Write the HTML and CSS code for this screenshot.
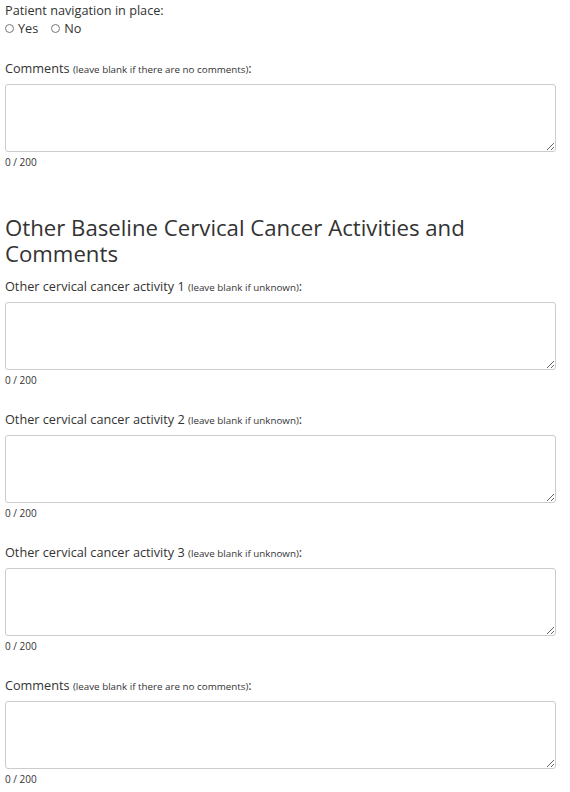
FILE: index.html
```html
<!DOCTYPE html>
<html>
<head>
<meta charset="utf-8">
<link rel="stylesheet" href="styles.css">
</head>
<body>
<div class="page">
  <div class="field">
    <div class="label">Patient navigation in place:</div>
    <div class="radios">
      <label class="radio"><span class="dot"></span>Yes</label>
      <label class="radio"><span class="dot"></span>No</label>
    </div>
  </div>

  <div class="block first">
    <div class="label">Comments <small>(leave blank if there are no comments)</small>:</div>
    <textarea class="box"></textarea>
    <div class="count">0 / 200</div>
  </div>

  <h2 class="heading">Other Baseline Cervical Cancer Activities and Comments</h2>

  <div class="block top">
    <div class="label">Other cervical cancer activity 1 <small>(leave blank if unknown)</small>:</div>
    <textarea class="box"></textarea>
    <div class="count">0 / 200</div>
  </div>
  <div class="block">
    <div class="label">Other cervical cancer activity 2 <small>(leave blank if unknown)</small>:</div>
    <textarea class="box"></textarea>
    <div class="count">0 / 200</div>
  </div>
  <div class="block">
    <div class="label">Other cervical cancer activity 3 <small>(leave blank if unknown)</small>:</div>
    <textarea class="box"></textarea>
    <div class="count">0 / 200</div>
  </div>
  <div class="block">
    <div class="label">Comments <small>(leave blank if there are no comments)</small>:</div>
    <textarea class="box"></textarea>
    <div class="count">0 / 200</div>
  </div>
</div>
</body>
</html>
```

FILE: styles.css
```css
html, body {
  margin: 0;
  padding: 0;
  background: #fff;
}
.page {
  font-family: "Open Sans", "DejaVu Sans", sans-serif;
  color: #333;
  padding: 1px 0 0 5px;
  width: 551px;
}
.label {
  font-size: 12.7px;
  line-height: 18px;
  height: 18px;
}
.label small {
  font-size: 9.8px;
  line-height: 1;
}
.radios {
  display: flex;
  gap: 13px;
  font-size: 12.7px;
  line-height: 18px;
}
.radio {
  display: flex;
  align-items: center;
  gap: 4px;
}
.dot {
  width: 7px;
  height: 7px;
  border: 1px solid #777;
  border-radius: 50%;
  display: inline-block;
}
.block {
  margin-top: 23px;
}
.block.first {
  margin-top: 22px;
}
.block.top {
  margin-top: 0;
}
.box {
  display: block;
  box-sizing: border-box;
  width: 551px;
  height: 68px;
  margin: 7px 0 0 0;
  border: 1px solid #ccc;
  border-radius: 3px;
  resize: vertical;
  font-family: inherit;
}
.count {
  font-size: 10px;
  line-height: 14px;
  margin-top: 3px;
}
.heading {
  font-size: 22.2px;
  font-weight: 400;
  line-height: 26px;
  margin: 46px 0 10px 0;
  color: #333;
}
```
